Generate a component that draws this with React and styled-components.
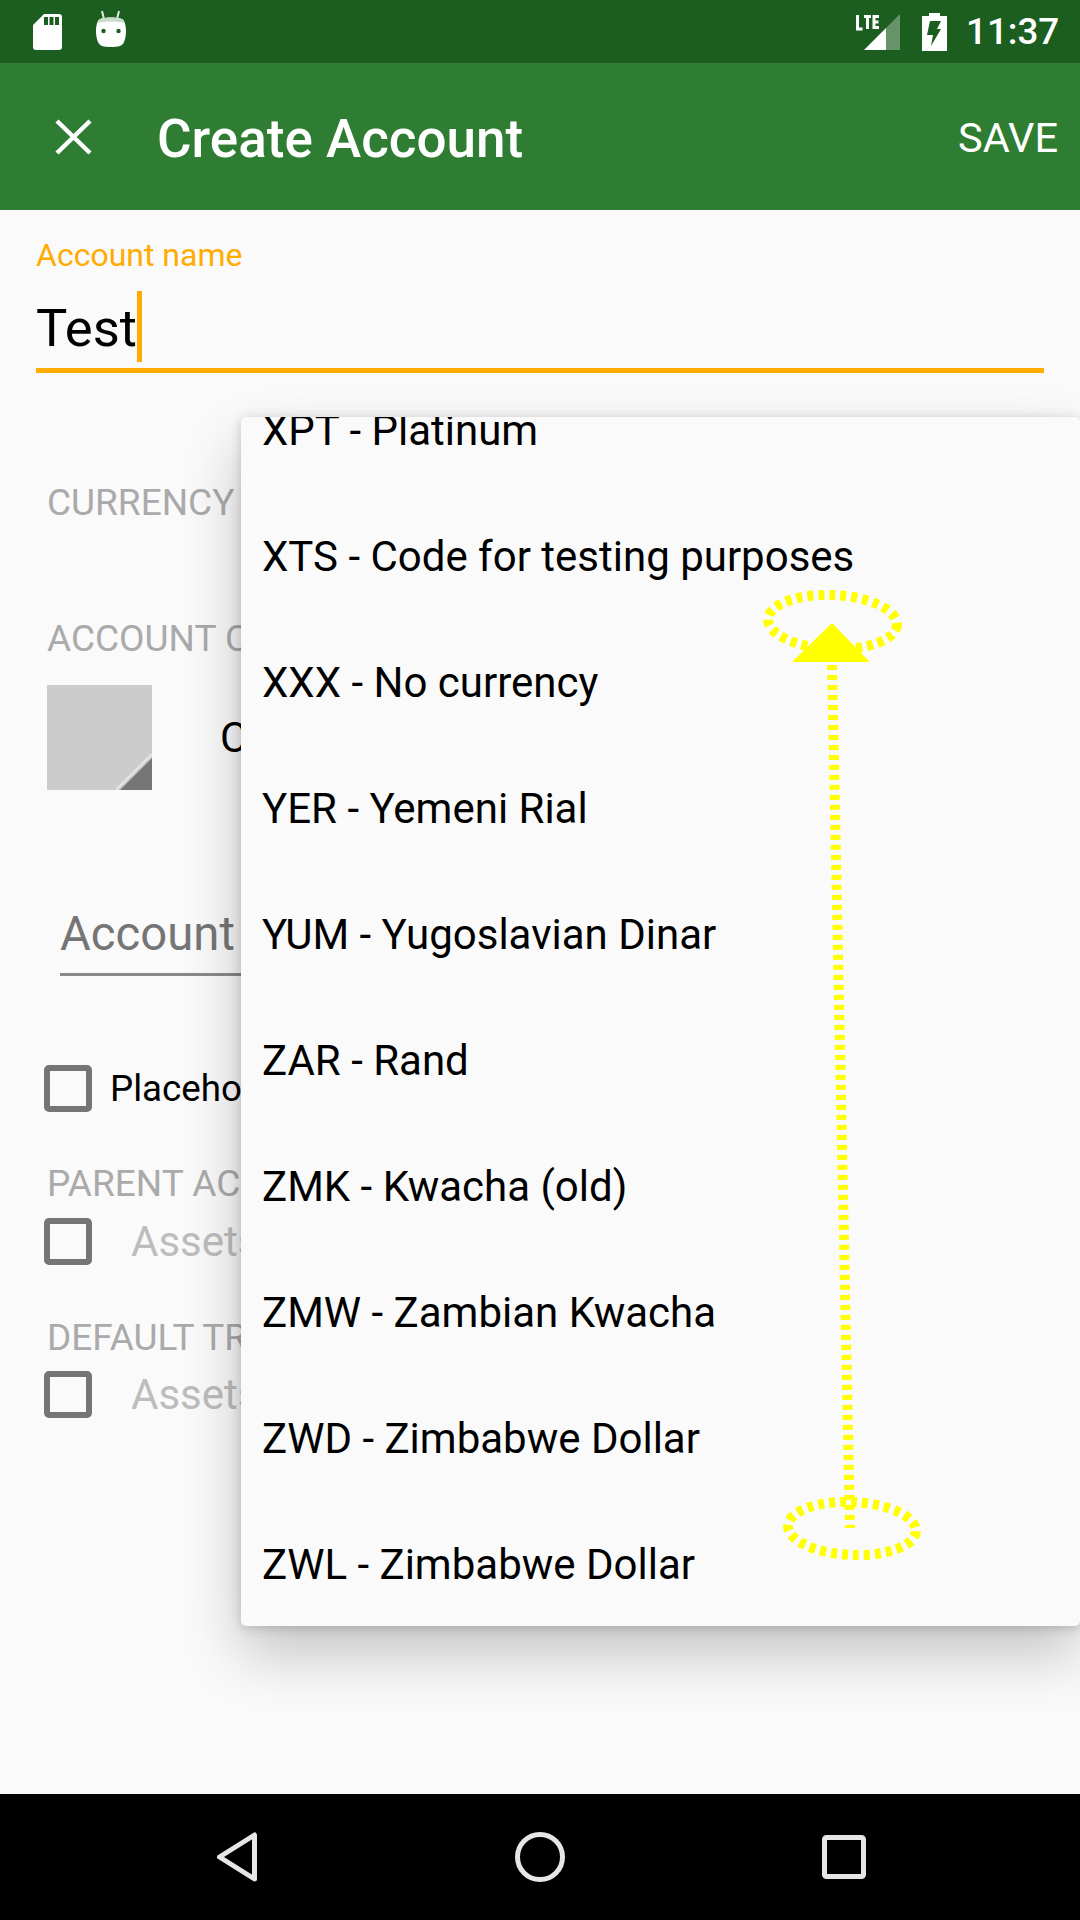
import React from "react";
import styled, { createGlobalStyle } from "styled-components";

const GlobalStyle = createGlobalStyle`
  html, body {
    margin: 0;
    padding: 0;
    background: #000;
  }
  * {
    box-sizing: border-box;
  }
`;

const Screen = styled.div`
  position: relative;
  width: 1080px;
  height: 1920px;
  display: flex;
  flex-direction: column;
  overflow: hidden;
  background: #fafafa;
  font-family: Roboto, "Noto Sans", sans-serif;
`;

const StatusBar = styled.div`
  height: 63px;
  flex: none;
  display: flex;
  align-items: center;
  padding: 0 22px 0 32px;
  background: #1b5e20;
`;

const StatusGroup = styled.div`
  display: flex;
  align-items: center;
  gap: ${(p) => p.$gap}px;
  margin-left: ${(p) => (p.$end ? "auto" : "0")};
`;

const Clock = styled.span`
  width: 92px;
  margin-left: -2px;
  color: #fff;
  font-size: 36.75px;
  font-weight: 500;
  line-height: 63px;
  white-space: nowrap;
`;

const Toolbar = styled.div`
  height: 147px;
  flex: none;
  display: flex;
  align-items: center;
  padding: 0 22px 0 55px;
  background: #2e7d32;
  color: #fff;
`;

const Title = styled.h1`
  margin: 4px 0 0 65px;
  font-size: 53px;
  font-weight: 500;
  line-height: 70px;
`;

const SaveAction = styled.span`
  margin: 2px 0 0 auto;
  font-size: 41.500px;
  line-height: 60px;
`;

const Form = styled.div`
  flex: 1;
  display: flex;
  flex-direction: column;
  align-items: flex-start;
  padding: 28px 36px 0;
`;

const NameLabel = styled.label`
  height: 36px;
  color: #ffab00;
  font-size: 32px;
  line-height: 34px;
`;

const NameInput = styled.div`
  width: 100%;
  height: 82px;
  margin-top: 17px;
  padding-bottom: 6px;
  display: flex;
  align-items: center;
  border-bottom: 5px solid #ffab00;
  color: #000;
  font-size: 52.5px;
`;

const NameValue = styled.span`
  padding-top: 2px;
`;

const Caret = styled.span`
  width: 5px;
  height: 71px;
  background: #ffab00;
`;

const SectionLabel = styled.div`
  margin: ${(p) => p.$top}px 0 0 11px;
  color: #aaaaaa;
  font-size: 37px;
  line-height: 38px;
  height: 36px;
  white-space: nowrap;
`;

const ColorRow = styled.div`
  display: flex;
  align-items: center;
  gap: 68px;
  margin: 29px 0 0 11px;
  color: #000;
  font-size: 42px;
`;

const Swatch = styled.div`
  position: relative;
  width: 105px;
  height: 105px;
  background: #cccccc;
  overflow: hidden;
`;

const SwatchCorner = styled.svg`
  position: absolute;
  right: 0;
  bottom: 0;
`;

const DescriptionInput = styled.div`
  width: 960px;
  margin: 114px 0 0 24px;
  padding-bottom: 9px;
  border-bottom: 3px solid #8a8a8a;
  color: #757575;
  font-size: 47.25px;
  line-height: 60px;
`;

const CheckRow = styled.div`
  height: 47px;
  display: flex;
  align-items: center;
  margin: ${(p) => p.$top}px 0 0 8px;
`;

const CheckBox = styled.span`
  width: 48px;
  height: 47px;
  flex: none;
  border: 6px solid #757575;
  border-radius: 5px;
`;

const CheckText = styled.span`
  margin-left: ${(p) => (p.$muted ? 39 : 18)}px;
  color: ${(p) => (p.$muted ? "#bdbdbd" : "#000")};
  font-size: ${(p) => (p.$muted ? 42 : 36.75)}px;
  white-space: nowrap;
`;

const NavBar = styled.div`
  height: 126px;
  flex: none;
  display: flex;
  align-items: center;
  justify-content: space-between;
  padding: 0 214px 0 216px;
  background: #000;
`;

const Popup = styled.div`
  position: absolute;
  top: 417px;
  left: 241px;
  right: 0;
  height: 1209px;
  overflow: hidden;
  border-radius: 5px;
  background: #fafafa;
  box-shadow: 0 28px 60px rgba(0, 0, 0, 0.22), 0 2px 12px rgba(0, 0, 0, 0.18);
`;

const CurrencyList = styled.ul`
  margin: -49px 0 0;
  padding: 0;
  list-style: none;
`;

const CurrencyRow = styled.li`
  height: 126px;
  padding-left: 21px;
  color: #000;
  font-size: 42px;
  line-height: 126px;
  white-space: nowrap;
`;

const Annotation = styled.svg`
  position: absolute;
  top: 0;
  left: 0;
  pointer-events: none;
`;

const currencies = [
  "XPT - Platinum",
  "XTS - Code for testing purposes",
  "XXX - No currency",
  "YER - Yemeni Rial",
  "YUM - Yugoslavian Dinar",
  "ZAR - Rand",
  "ZMK - Kwacha (old)",
  "ZMW - Zambian Kwacha",
  "ZWD - Zimbabwe Dollar",
  "ZWL - Zimbabwe Dollar",
];

function SdCardIcon() {
  return (
    <svg width="31" height="38" viewBox="0 0 31 38">
      <path
        fill="#fff"
        fillRule="evenodd"
        d="M12 1h15a3 3 0 0 1 3 3v30a3 3 0 0 1-3 3H4a3 3 0 0 1-3-3V12zM12 4v8h4V4zM17.500 4v8h4V4zM23 4v8h4V4z"
      />
    </svg>
  );
}

function AndroidIcon() {
  return (
    <svg width="32" height="38" viewBox="0 0 32 38" style={{ marginBottom: 5 }}>
      <path d="M7 1l2 8M24 1l-2 8" stroke="#dfe9df" strokeWidth="2" />
      <path
        fill="#fff"
        d="M5 9c6-2 16-2 22 0 3 1 4 8 4 12 0 7-2 14-6 15-5 1.300-13 1.300-18 0-4-1-6-8-6-15 0-4 1-11 4-12z"
      />
      <path fill="#c8dbc8" d="M5 9c6-2 16-2 22 0 1 .5 2 2 2.600 4-7-2-20-2-27 0C3 11 4 9.500 5 9z" />
      <circle cx="8.500" cy="21" r="2.200" fill="#1b5e20" />
      <circle cx="23.500" cy="21" r="2.200" fill="#1b5e20" />
    </svg>
  );
}

function SignalIcon() {
  return (
    <svg width="46" height="38" viewBox="0 0 46 38">
      <path fill="#fff" d="M9 37L31 15v22z" />
      <path fill="#fff" fillOpacity="0.33" d="M31 15L45 1v36H31z" />
      <path
        fill="none"
        stroke="#fff"
        strokeWidth="3"
        d="M2.500 2v14h5M9 3.500h7M12.500 3.500V16M24 3.500h-5v11h5M19 9h4.500"
      />
    </svg>
  );
}

function BatteryIcon() {
  return (
    <svg width="25" height="38" viewBox="0 0 25 38">
      <path
        fill="#fff"
        fillRule="evenodd"
        d="M7 0h11v3h7v35H0V3h7zM8 8h11l-4 8h4L9 33l2-11H5z"
      />
    </svg>
  );
}

function CloseIcon() {
  return (
    <svg width="37" height="36" viewBox="0 0 37 36">
      <path d="M2 2l33 32M35 2L2 34" stroke="#fff" strokeWidth="4.500" fill="none" />
    </svg>
  );
}

function BackIcon() {
  return (
    <svg width="42" height="50" viewBox="0 0 42 50">
      <path
        d="M38.500 3v44L3.500 25z"
        fill="none"
        stroke="#e6e6e6"
        strokeWidth="5"
        strokeLinejoin="round"
      />
    </svg>
  );
}

function HomeIcon() {
  return (
    <svg width="50" height="50" viewBox="0 0 50 50">
      <circle cx="25" cy="25" r="22.500" fill="none" stroke="#e6e6e6" strokeWidth="5" />
    </svg>
  );
}

function RecentsIcon() {
  return (
    <svg width="44" height="44" viewBox="0 0 44 44">
      <rect
        x="2.500"
        y="2.500"
        width="39"
        height="39"
        rx="2"
        fill="none"
        stroke="#e6e6e6"
        strokeWidth="5"
      />
    </svg>
  );
}

// yellow marks drawn on top of the screenshot, swipe from bottom to top
function SwipeMarks() {
  return (
    <Annotation width="1080" height="1920" viewBox="0 0 1080 1920">
      <g fill="none" stroke="#ffff00" strokeWidth="10">
        <ellipse
          cx="832.500"
          cy="622"
          rx="64.500"
          ry="27"
          strokeDasharray="6 5"
          transform="rotate(2.500 832.500 622)"
        />
        <ellipse
          cx="852"
          cy="1528.500"
          rx="64"
          ry="26.500"
          strokeDasharray="6 5"
          transform="rotate(2.500 852 1528.500)"
        />
        <path d="M832 665L850 1528" strokeDasharray="5 5" />
      </g>
      <path d="M832 623L870 662H792z" fill="#ffff00" />
    </Annotation>
  );
}

export default function App() {
  return (
    <>
      <GlobalStyle />
      <Screen>
        <StatusBar>
          <StatusGroup $gap={32}>
            <SdCardIcon />
            <AndroidIcon />
          </StatusGroup>
          <StatusGroup $gap={21} $end>
            <SignalIcon />
            <BatteryIcon />
            <Clock>11:37</Clock>
          </StatusGroup>
        </StatusBar>

        <Toolbar>
          <CloseIcon />
          <Title>Create Account</Title>
          <SaveAction>SAVE</SaveAction>
        </Toolbar>

        <Form>
          <NameLabel>Account name</NameLabel>
          <NameInput>
            <NameValue>Test</NameValue>
            <Caret />
          </NameInput>

          <SectionLabel $top={111}>CURRENCY</SectionLabel>
          <SectionLabel $top={100}>ACCOUNT COLOR &amp; TYPE</SectionLabel>
          <ColorRow>
            <Swatch>
              <SwatchCorner width="36" height="36" viewBox="0 0 36 36">
                <path d="M36 4v32H4z" fill="#757575" />
                <path d="M0 36L36 0" stroke="#e8e8e8" strokeWidth="2" />
              </SwatchCorner>
            </Swatch>
            Choose color
          </ColorRow>

          <DescriptionInput>Account description</DescriptionInput>

          <CheckRow $top={89}>
            <CheckBox />
            <CheckText>Placeholder account</CheckText>
          </CheckRow>

          <SectionLabel $top={53}>PARENT ACCOUNT</SectionLabel>
          <CheckRow $top={17}>
            <CheckBox />
            <CheckText $muted>Assets</CheckText>
          </CheckRow>

          <SectionLabel $top={54}>DEFAULT TRANSFER ACCOUNT</SectionLabel>
          <CheckRow $top={16}>
            <CheckBox />
            <CheckText $muted>Assets</CheckText>
          </CheckRow>
        </Form>

        <NavBar>
          <BackIcon />
          <HomeIcon />
          <RecentsIcon />
        </NavBar>

        <Popup>
          <CurrencyList>
            {currencies.map((c) => (
              <CurrencyRow key={c}>{c}</CurrencyRow>
            ))}
          </CurrencyList>
        </Popup>

        <SwipeMarks />
      </Screen>
    </>
  );
}
